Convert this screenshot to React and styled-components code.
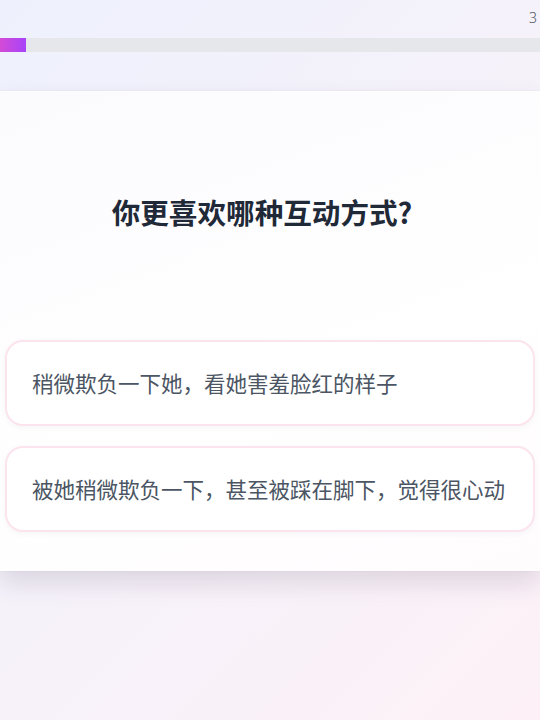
import React from 'react'
import styled, { createGlobalStyle } from 'styled-components'

const GlobalStyle = createGlobalStyle`
  html, body {
    margin: 0;
    padding: 0;
  }
  body {
    font-family: "Noto Sans", "Noto Sans CJK SC", sans-serif;
    background: linear-gradient(135deg, #eef1fd 0%, #f6f2fa 50%, #fdf1f7 100%);
    min-height: 720px;
  }
`

const Page = styled.div`
  width: 540px;
  height: 720px;
  overflow: hidden;
  display: flex;
  flex-direction: column;
`

const Header = styled.div`
  display: flex;
  justify-content: flex-end;
  padding: 8px 3px 0 0;
  height: 32px;
  box-sizing: border-box;
`

const Counter = styled.span`
  font-family: "Noto Sans", sans-serif;
  font-size: 14px;
  font-weight: 300;
  color: #4b5563;
  line-height: 20px;
`

const Track = styled.div`
  margin-top: 6px;
  height: 14px;
  background: #e5e7eb;
`

const Fill = styled.div`
  height: 100%;
  background: linear-gradient(90deg, #d44bd6 0%, #a743f9 100%);
`

const Card = styled.div`
  margin-top: 39px;
  background: linear-gradient(160deg, #fbfbfe 0%, #ffffff 60%, #fffcfe 100%);
  box-shadow: 0 12px 24px rgba(60, 40, 80, 0.14), 0 0 2px rgba(0, 0, 0, 0.06);
  padding: 101px 5px 39px;
  display: flex;
  flex-direction: column;
`

const Question = styled.h2`
  margin: 0;
  padding-right: 16px;
  text-align: center;
  font-family: "Noto Sans CJK SC", sans-serif;
  font-size: 28.6px;
  line-height: 40px;
  font-weight: 700;
  color: #1f2937;
`

const Options = styled.div`
  margin-top: 108px;
  display: flex;
  flex-direction: column;
  gap: 20px;
`

const Option = styled.button`
  display: block;
  width: 100%;
  text-align: left;
  background: #ffffff;
  border: 2px solid #fbe4ee;
  border-radius: 18px;
  padding: 25px 25px;
  font-family: "Noto Sans CJK SC", sans-serif;
  font-size: 21.5px;
  line-height: 32px;
  color: #4b5563;
  box-shadow: 0 2px 6px rgba(0, 0, 0, 0.04);
  cursor: pointer;
`

const options = [
  '稍微欺负一下她，看她害羞脸红的样子',
  '被她稍微欺负一下，甚至被踩在脚下，觉得很心动',
]

export default function App() {
  const progress = 26 / 540
  return (
    <>
      <GlobalStyle />
      <Page>
        <Header>
          <Counter>3</Counter>
        </Header>
        <Track>
          <Fill style={{ width: `${progress * 100}%` }} />
        </Track>
        <Card>
          <Question>你更喜欢哪种互动方式?</Question>
          <Options>
            {options.map((o) => (
              <Option key={o}>{o}</Option>
            ))}
          </Options>
        </Card>
      </Page>
    </>
  )
}
